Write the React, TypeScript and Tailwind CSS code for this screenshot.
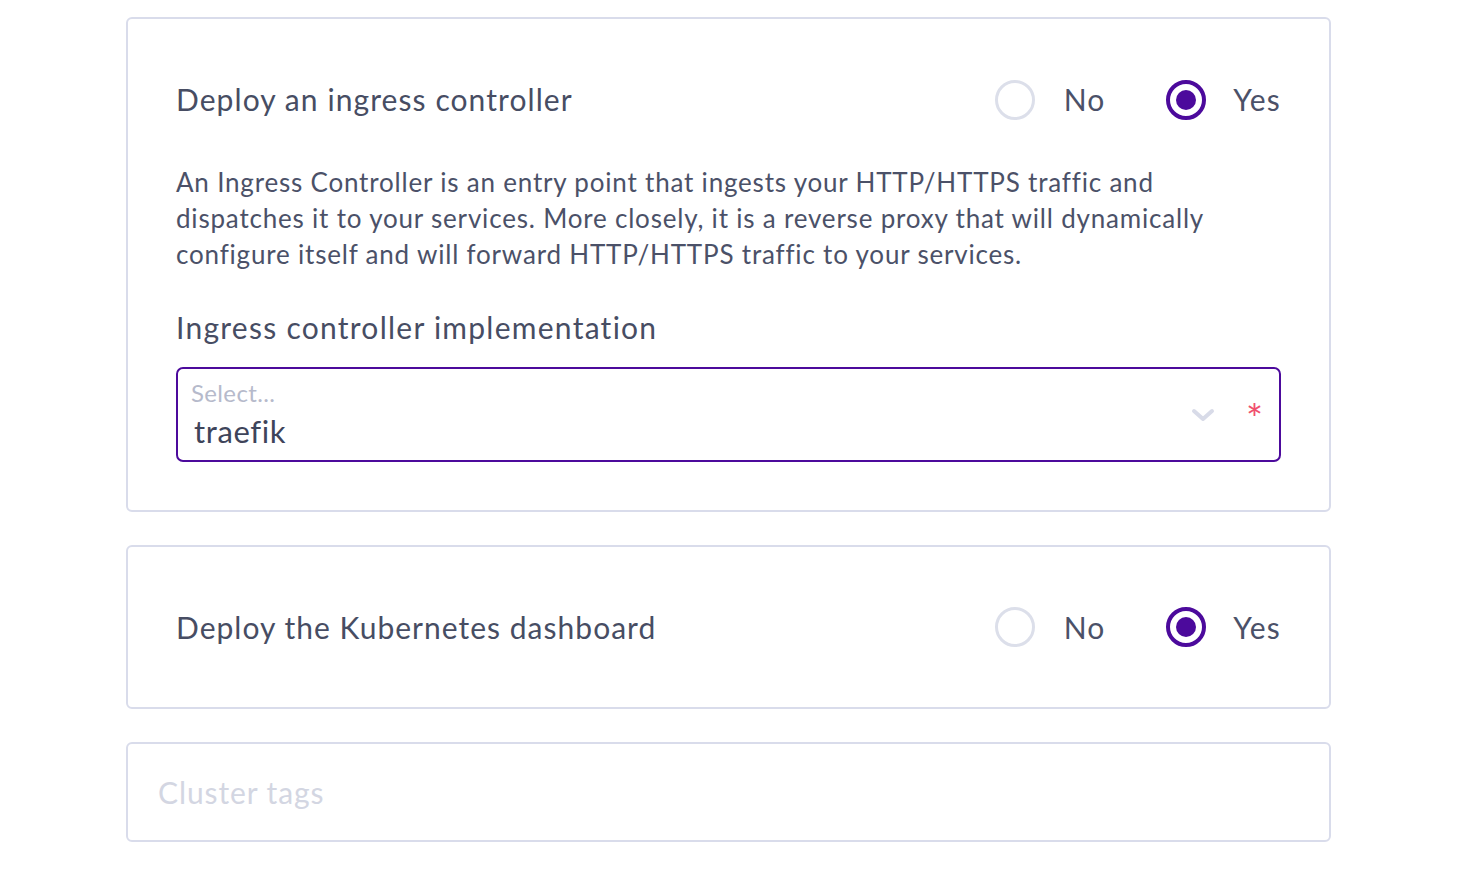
import React from 'react';

function Radio({ checked }: { checked: boolean }) {
  return checked ? (
    <span className="flex h-10 w-10 items-center justify-center rounded-full border-[4px] border-[#4c0a9c]">
      <span className="h-5 w-5 rounded-full bg-[#4c0a9c]" />
    </span>
  ) : (
    <span className="h-10 w-10 rounded-full border-[3px] border-[#dcdfea]" />
  );
}

function YesNo({ value }: { value: boolean }) {
  return (
    <div className="flex items-center">
      <label className="flex items-center gap-[29px]">
        <Radio checked={!value} />
        <span className="text-[30px] tracking-[0.03em] text-[#4b5168]">No</span>
      </label>
      <label className="ml-[61px] flex items-center gap-[27px]">
        <Radio checked={value} />
        <span className="text-[30px] tracking-[0.04em] text-[#4b5168]">Yes</span>
      </label>
    </div>
  );
}

export default function App() {
  return (
    <div
      className="min-h-screen bg-white pt-[17px]"
      style={{ fontFamily: 'Lato, "Noto Sans", sans-serif' }}
    >
      <div className="mx-[126px] w-[1205px] space-y-[33px]">
        {/* Ingress controller */}
        <section className="rounded-[6px] border-2 border-[#d9dceb] px-[48px] pb-[48px] pt-[58px]">
          <div className="flex items-center justify-between">
            <h3 className="text-[30px] tracking-[0.036em] text-[#474d63]">Deploy an ingress controller</h3>
            <YesNo value={true} />
          </div>
          <p className="mt-[42px] text-[26px] leading-[36px] tracking-[0.031em] text-[#4b5168]">
            An Ingress Controller is an entry point that ingests your HTTP/HTTPS traffic and
            <br />
            dispatches it to your services. More closely, it is a reverse proxy that will dynamically
            <br />
            configure itself and will forward HTTP/HTTPS traffic to your services.
          </p>
          <h4 className="mt-[36px] text-[30px] leading-[38px] tracking-[0.042em] text-[#474d63]">
            Ingress controller implementation
          </h4>
          <div className="mt-[21px] flex h-[95px] items-center rounded-[7px] border-2 border-[#4c0a9c] pl-[13px] pr-[16px]">
            <div className="flex flex-1 flex-col">
              <span className="text-[24px] leading-[26px] tracking-[0.015em] text-[#b6bacb]">Select...</span>
              <span className="ml-[3px] mt-[6px] text-[31px] leading-[38px] tracking-[0.02em] text-[#3e445a]">traefik</span>
            </div>
            <svg width="26" height="16" viewBox="0 0 26 16" className="mr-[30px]">
              <path d="M4 4l9 8 9-8" fill="none" stroke="#d8dbe8" strokeWidth="4" strokeLinecap="round" strokeLinejoin="round" />
            </svg>
            <span className="mt-[8px] text-[40px] leading-none text-[#f0506e]">*</span>
          </div>
        </section>

        {/* Kubernetes dashboard */}
        <section className="flex h-[164px] items-center justify-between rounded-[6px] border-2 border-[#d9dceb] px-[48px]">
          <h3 className="text-[30px] tracking-[0.034em] text-[#474d63]">Deploy the Kubernetes dashboard</h3>
          <YesNo value={true} />
        </section>

        {/* Cluster tags */}
        <section className="flex h-[100px] items-center rounded-[6px] border-2 border-[#d9dceb] px-[30px]">
          <span className="text-[30px] tracking-[0.03em] text-[#d3d6e2]">Cluster tags</span>
        </section>
      </div>
    </div>
  );
}
